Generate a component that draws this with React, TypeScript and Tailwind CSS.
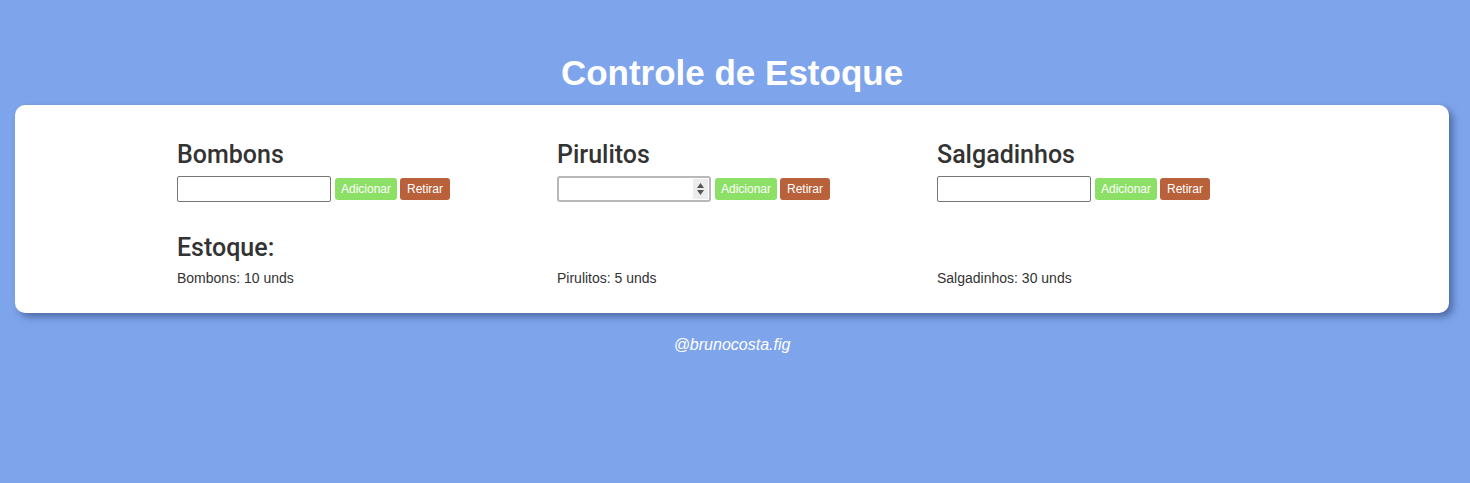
import React, { useState } from 'react';

type Product = { name: string; qty: number; spinner?: boolean };

const initial: Product[] = [
  { name: 'Bombons', qty: 10 },
  { name: 'Pirulitos', qty: 5, spinner: true },
  { name: 'Salgadinhos', qty: 30 },
];

export default function App() {
  const [products, setProducts] = useState<Product[]>(initial);
  const [values, setValues] = useState<string[]>(['', '', '']);

  const update = (index: number, sign: number) => {
    const n = parseInt(values[index], 10);
    if (isNaN(n)) return;
    setProducts(products.map((p, i) => (i === index ? { ...p, qty: Math.max(0, p.qty + sign * n) } : p)));
  };

  return (
    <div className="min-h-[483px] bg-[#7ea4eb] pl-[15px] pr-[21px] font-['Liberation_Sans',Arial,sans-serif] text-[#333333]">
      <h1 className="pt-[52px] text-center text-[35px] font-bold leading-[42px] text-white">Controle de Estoque</h1>
      <div className="mt-[11px] rounded-[10px] bg-white pb-[27px] pl-[162px] pt-[36px] shadow-[4px_4px_7px_rgba(40,60,110,0.55)]">
        <div className="grid grid-cols-[380px_380px_380px]">
          {products.map((p, i) => (
            <div key={p.name}>
              <h2 className="font-['Roboto',sans-serif] text-[25px] font-medium leading-[28px]">{p.name}</h2>
              <div className="mt-[7px] flex items-center">
                <div className="relative">
                  <input
                    type={p.spinner ? 'number' : 'text'}
                    value={values[i]}
                    onChange={(e) => setValues(values.map((v, j) => (j === i ? e.target.value : v)))}
                    className={
                      p.spinner
                        ? 'block h-[26px] w-[154px] rounded-[3px] border-2 border-[#b8b8b8] bg-white px-1 text-[13px] outline-none [appearance:textfield]'
                        : 'block h-[26px] w-[154px] rounded-[2px] border border-[#767676] bg-white px-1 text-[13px] outline-none'
                    }
                  />
                  {p.spinner && (
                    <div className="pointer-events-none absolute right-[3px] top-[3px] flex h-[20px] w-[15px] flex-col items-center justify-center gap-[2px] bg-[#ececec]">
                      <svg width="7" height="5" viewBox="0 0 7 5">
                        <path d="M3.5 0 L7 5 L0 5 Z" fill="#555" />
                      </svg>
                      <svg width="7" height="5" viewBox="0 0 7 5">
                        <path d="M0 0 L7 0 L3.5 5 Z" fill="#555" />
                      </svg>
                    </div>
                  )}
                </div>
                <button
                  onClick={() => update(i, 1)}
                  className="ml-[4px] h-[22px] rounded-[3px] bg-[#8de066] px-[6px] text-[12px] leading-[22px] text-white"
                >
                  Adicionar
                </button>
                <button
                  onClick={() => update(i, -1)}
                  className="ml-[3px] h-[22px] rounded-[3px] bg-[#b9613a] px-[7px] text-[12px] leading-[22px] text-white"
                >
                  Retirar
                </button>
              </div>
            </div>
          ))}
          <h2 className="col-span-3 mt-[32px] font-['Roboto',sans-serif] text-[25px] font-medium leading-[28px]">Estoque:</h2>
          {products.map((p) => (
            <p key={p.name} className="mt-[8px] text-[14px] leading-[16px]">
              {p.name}: {p.qty} unds
            </p>
          ))}
        </div>
      </div>
      <p className="mt-[23px] text-center text-[16px] italic leading-[18px] text-white">@brunocosta.fig</p>
    </div>
  );
}
